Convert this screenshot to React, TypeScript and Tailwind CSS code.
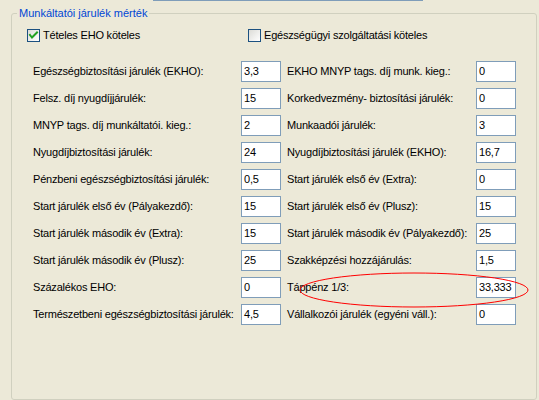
import React from "react";

const rows: [string, string, string, string][] = [
  ["Egészségbiztosítási járulék (EKHO):", "3,3", "EKHO MNYP tags. díj munk. kieg.:", "0"],
  ["Felsz. díj nyugdíjjárulék:", "15", "Korkedvezmény- biztosítási járulék:", "0"],
  ["MNYP tags. díj munkáltatói. kieg.:", "2", "Munkaadói járulék:", "3"],
  ["Nyugdíjbiztosítási járulék:", "24", "Nyugdíjbiztosítási járulék (EKHO):", "16,7"],
  ["Pénzbeni egészségbiztosítási járulék:", "0,5", "Start járulék első év (Extra):", "0"],
  ["Start járulék első év (Pályakezdő):", "15", "Start járulék első év (Plusz):", "15"],
  ["Start járulék második év (Extra):", "15", "Start járulék második év (Pályakezdő):", "25"],
  ["Start járulék második év (Plusz):", "25", "Szakképzési hozzájárulás:", "1,5"],
  ["Százalékos EHO:", "0", "Táppénz 1/3:", "33,333"],
  ["Természetbeni egészségbiztosítási járulék:", "4,5", "Vállalkozói járulék (egyéni váll.):", "0"],
];

function Checkbox({ checked }: { checked: boolean }) {
  return (
    <div className="w-[13px] h-[13px] border border-[#1C5180] bg-gradient-to-br from-[#DCDCD7] to-white flex items-center justify-center shrink-0">
      {checked && (
        <svg width="11" height="11" viewBox="0 0 11 11">
          <polyline points="2,5 4,7.5 9,2.5" fill="none" stroke="#21A121" strokeWidth="2" strokeLinecap="square" />
        </svg>
      )}
    </div>
  );
}

function Field({ value }: { value: string }) {
  return (
    <div className="w-[40px] h-[21px] border border-[#7F9DB9] bg-white pl-[2px] flex items-center text-[11px] text-black whitespace-nowrap overflow-hidden">
      {value}
    </div>
  );
}

export default function App() {
  return (
    <div
      className="relative w-[539px] h-[400px] bg-[#ECE9D8] overflow-hidden text-black"
      style={{ fontFamily: '"Liberation Sans", Arial, sans-serif' }}
    >
      <div className="ml-[153px] w-[270px] h-px bg-[#7F9DB9]" />
      <div className="relative mt-[12px] ml-[11px] mr-[2px] h-[387px] border border-[#D0D0BF] rounded-[3px]">
        <span className="absolute left-[5px] top-[-8px] px-[2px] bg-[#ECE9D8] text-[#0046D5] text-[11px] leading-[14px] whitespace-nowrap">
          Munkáltatói járulék mérték
        </span>
        <div className="flex pt-[15px] pl-[15px] text-[11px] leading-[13px] tracking-[-0.2px]">
          <div className="flex items-center gap-[3px] w-[221px]">
            <Checkbox checked />
            <span>Tételes EHO köteles</span>
          </div>
          <div className="flex items-center gap-[3px]">
            <Checkbox checked={false} />
            <span>Egészségügyi szolgáltatási köteles</span>
          </div>
        </div>
        <div className="grid grid-cols-[208px_46px_189px_40px] gap-y-[6px] pl-[21px] mt-[19px] text-[11px] tracking-[-0.2px]">
          {rows.map((r, i) => (
            <React.Fragment key={i}>
              <div className="flex items-center h-[21px] whitespace-nowrap">{r[0]}</div>
              <Field value={r[1]} />
              <div className="flex items-center h-[21px] whitespace-nowrap">{r[2]}</div>
              <Field value={r[3]} />
            </React.Fragment>
          ))}
        </div>
      </div>
      <svg className="absolute left-[298px] top-[271px] pointer-events-none" width="232" height="38" viewBox="0 0 232 38">
        <ellipse cx="116" cy="19" rx="114" ry="17" fill="none" stroke="#FF0000" strokeWidth="1" />
      </svg>
    </div>
  );
}
